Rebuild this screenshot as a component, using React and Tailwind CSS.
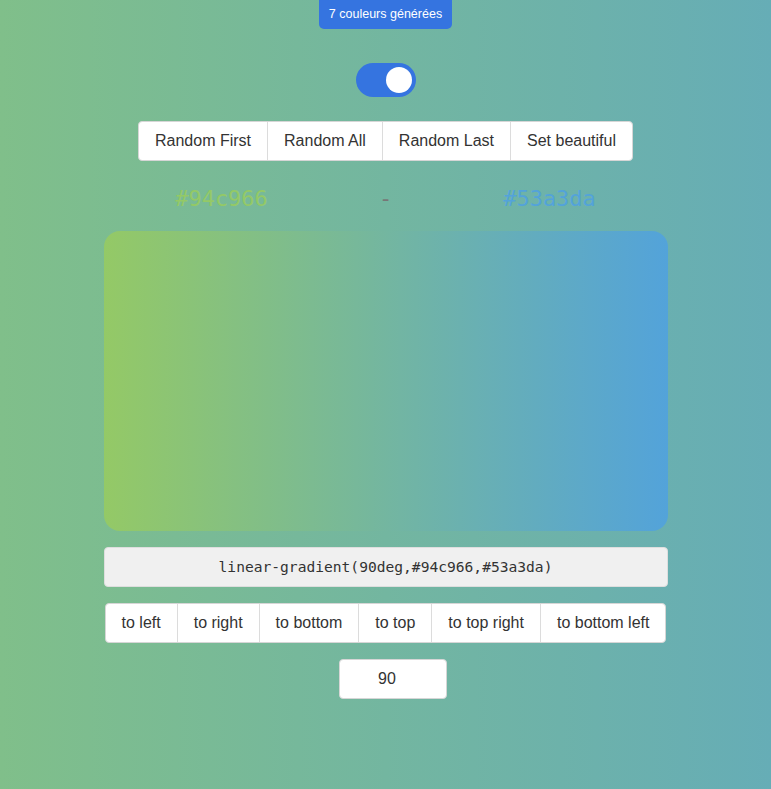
export default function App() {
  const btn = "h-full flex items-center px-4 border-r border-[#dcdcdc] last:border-r-0 text-[16px] text-[#333]";
  return (
    <div
      className="w-full h-[789px] flex flex-col items-center bg-[linear-gradient(90deg,#80bf8a,#66adb6)] font-['Liberation_Sans',Arial,sans-serif]"
    >
      <div className="h-[29px] px-[10px] flex items-center bg-[#3574e0] rounded-b-[5px] text-white text-[12.5px]">
        7 couleurs générées
      </div>

      <div className="mt-[34px] w-[60px] h-[34px] rounded-full bg-[#3574e0] flex items-center justify-end pr-[4px]">
        <div className="w-[26px] h-[26px] rounded-full bg-white" />
      </div>

      <div className="mt-[24px] h-[40px] flex bg-white rounded-[4px] border border-[#d6d6d6]">
        <div className={btn}>Random First</div>
        <div className={btn}>Random All</div>
        <div className={btn}>Random Last</div>
        <div className={btn}>Set beautiful</div>
      </div>

      <div className="mt-[20px] w-[492px] grid grid-cols-3 font-['DejaVu_Sans_Mono',monospace] text-[22px] h-[34px] items-center">
        <div className="text-center text-[#94c966]">#94c966</div>
        <div className="text-center text-[#777]">-</div>
        <div className="text-center text-[#53a3da]">#53a3da</div>
      </div>

      <div className="mt-[16px] w-[564px] h-[300px] rounded-[16px] bg-[linear-gradient(90deg,#94c966,#53a3da)]" />

      <div className="mt-[16px] w-[564px] h-[40px] rounded-[4px] bg-[#f0f0f0] border border-[#dedede] flex items-center justify-center font-['DejaVu_Sans_Mono',monospace] text-[14.6px] text-[#333]">
        linear-gradient(90deg,#94c966,#53a3da)
      </div>

      <div className="mt-[16px] h-[40px] flex bg-white rounded-[4px] border border-[#d6d6d6]">
        <div className={btn}>to left</div>
        <div className={btn}>to right</div>
        <div className={btn}>to bottom</div>
        <div className={btn}>to top</div>
        <div className={btn}>to top right</div>
        <div className={btn}>to bottom left</div>
      </div>

      <div className="mt-[16px] ml-[15px] w-[108px] h-[40px] bg-white rounded-[4px] border border-[#d6d6d6] flex items-center pl-[38px] text-[16px] text-[#333]">
        90
      </div>
    </div>
  );
}
